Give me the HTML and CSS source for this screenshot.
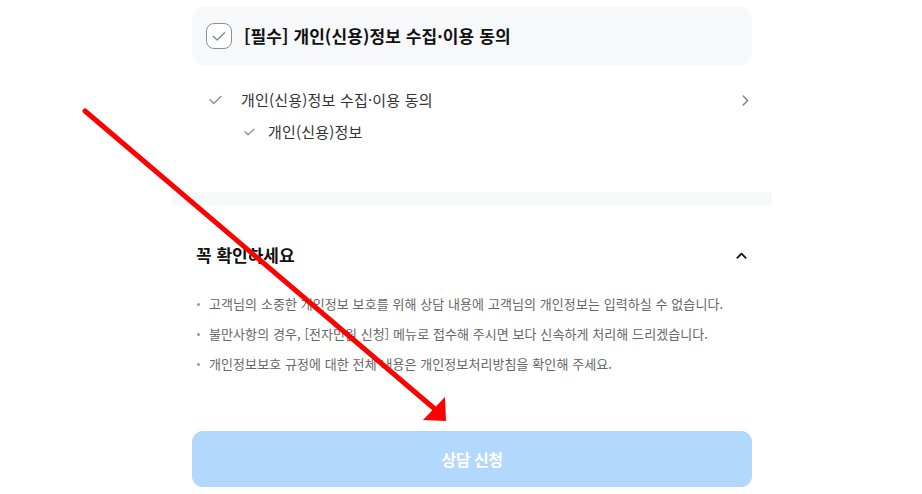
FILE: index.html
```html
<!DOCTYPE html>
<html lang="ko">
<head>
<meta charset="utf-8">
<title>상담 신청</title>
<link rel="stylesheet" href="styles.css">
</head>
<body>
<div class="page">
  <section class="agree">
    <div class="agree-card">
      <span class="checkbox">
        <svg width="14" height="11" viewBox="0 0 14 11"><path d="M1.5 5.5 L5.2 9 L12.5 1.8" fill="none" stroke="#8b8f99" stroke-width="1.6" stroke-linecap="round" stroke-linejoin="round"/></svg>
      </span>
      <span class="agree-title">[필수] 개인(신용)정보 수집·이용 동의</span>
    </div>
    <ul class="agree-list">
      <li class="agree-row">
        <span class="row-check">
          <svg width="13" height="10" viewBox="0 0 13 10"><path d="M1 4.8 L4.8 8.4 L12 1.4" fill="none" stroke="#8b8f99" stroke-width="1.4" stroke-linecap="round" stroke-linejoin="round"/></svg>
        </span>
        <span class="row-text">개인(신용)정보 수집·이용 동의</span>
        <span class="row-arrow">
          <svg width="7" height="11" viewBox="0 0 7 11"><path d="M1.2 1 L5.6 5.5 L1.2 10" fill="none" stroke="#80848c" stroke-width="1.5" stroke-linecap="round" stroke-linejoin="round"/></svg>
        </span>
      </li>
      <li class="agree-row sub">
        <span class="row-check small">
          <svg width="11" height="8" viewBox="0 0 11 8"><path d="M1 3.8 L4 6.8 L10 1.2" fill="none" stroke="#8b8f99" stroke-width="1.3" stroke-linecap="round" stroke-linejoin="round"/></svg>
        </span>
        <span class="row-text">개인(신용)정보</span>
      </li>
    </ul>
  </section>

  <div class="divider"></div>

  <section class="notice">
    <div class="notice-head">
      <h2 class="notice-title">꼭 확인하세요</h2>
      <svg class="caret" width="11" height="7" viewBox="0 0 11 7"><path d="M1.3 5.8 L5.5 1.6 L9.7 5.8" fill="none" stroke="#111" stroke-width="1.8" stroke-linecap="round" stroke-linejoin="round"/></svg>
    </div>
    <ul class="notice-list">
      <li>고객님의 소중한 개인정보 보호를 위해 상담 내용에 고객님의 개인정보는 입력하실 수 없습니다.</li>
      <li>불만사항의 경우, [전자민원 신청] 메뉴로 접수해 주시면 보다 신속하게 처리해 드리겠습니다.</li>
      <li>개인정보보호 규정에 대한 전체 내용은 개인정보처리방침을 확인해 주세요.</li>
    </ul>
  </section>

  <button class="submit" type="button" disabled>상담 신청</button>
</div>

<svg class="annotation" width="922" height="494" viewBox="0 0 922 494">
  <line x1="85" y1="111" x2="436" y2="410" stroke="#ff0000" stroke-width="5" stroke-linecap="round"/>
  <polygon points="446,421 445,397 423,420" fill="#ff0000"/>
</svg>
</body>
</html>
```

FILE: styles.css
```css
* { box-sizing: border-box; }

html, body {
  margin: 0;
  padding: 0;
  background: #ffffff;
}

body {
  font-family: "Noto Sans CJK KR", "Noto Sans", sans-serif;
  color: #111;
  width: 922px;
  height: 494px;
  overflow: hidden;
  position: relative;
}

.page {
  width: 600px;
  margin-left: 172px;
  padding-top: 7px;
}

.agree {
  padding: 0 20px;
}

.agree-card {
  height: 58px;
  background: #f7f8fa;
  border-radius: 12px;
  display: flex;
  align-items: center;
  padding-left: 14px;
}

.checkbox {
  width: 26px;
  height: 26px;
  border: 1.5px solid #8b8f99;
  border-radius: 8px;
  display: flex;
  align-items: center;
  justify-content: center;
  margin-right: 12px;
  background: #fff;
}

.agree-title {
  font-size: 17px;
  font-weight: 700;
  letter-spacing: 0.1px;
  line-height: 24px;
  color: #111;
}

.agree-list {
  list-style: none;
  margin: 0;
  padding: 24px 0 0 0;
}

.agree-row {
  display: flex;
  align-items: center;
  height: 22px;
  padding-left: 17px;
}

.agree-row.sub {
  margin-top: 10px;
  padding-left: 52px;
}

.row-check {
  width: 14px;
  display: flex;
  align-items: center;
  margin-right: 18px;
}

.row-check.small {
  width: 12px;
  margin-right: 12px;
}

.row-text {
  font-size: 15px;
  letter-spacing: 0.2px;
  color: #333;
  line-height: 22px;
}

.row-arrow {
  margin-left: auto;
  margin-right: 3px;
  display: flex;
  align-items: center;
}

.divider {
  height: 13px;
  background: #f7f8fa;
  margin-top: 49px;
}

.notice {
  padding: 0 20px;
}

.notice-head {
  display: flex;
  align-items: center;
  justify-content: space-between;
  margin-top: 38px;
  padding-left: 4px;
  padding-right: 5px;
}

.notice-title {
  margin: 0;
  font-size: 17px;
  font-weight: 700;
  letter-spacing: 0;
  line-height: 24px;
  color: #111;
}

.notice-list {
  list-style: none;
  margin: 27px 0 0 0;
  padding: 0 0 0 5px;
  display: flex;
  flex-direction: column;
  gap: 10px;
}

.notice-list li {
  position: relative;
  padding-left: 12px;
  font-size: 13px;
  letter-spacing: 0.08px;
  line-height: 20px;
  color: #666;
}

.notice-list li::before {
  content: "";
  position: absolute;
  left: 0;
  top: 9px;
  width: 3px;
  height: 3px;
  border-radius: 50%;
  background: #999;
}

.submit {
  display: block;
  width: 560px;
  height: 56px;
  margin: 57px 0 0 20px;
  border: none;
  border-radius: 11px;
  background: #b3d8fe;
  color: #fff;
  font-family: "Noto Sans CJK KR", "Noto Sans", sans-serif;
  font-size: 16px;
  font-weight: 700;
  letter-spacing: -0.5px;
}

.annotation {
  position: absolute;
  left: 0;
  top: 0;
  pointer-events: none;
}
```
